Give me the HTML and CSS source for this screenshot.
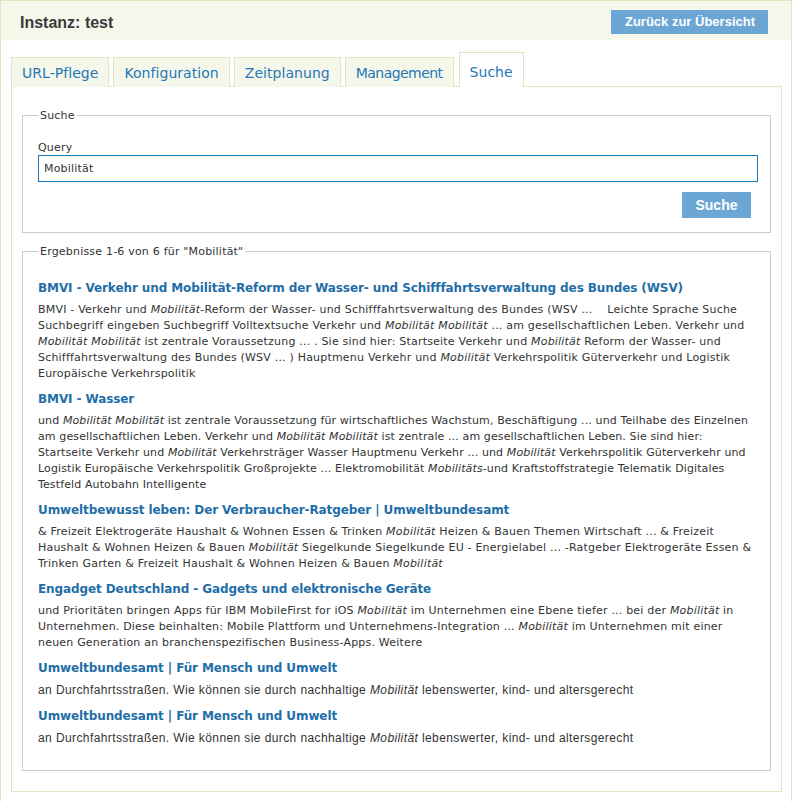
FILE: index.html
```html
<!DOCTYPE html>
<html lang="de">
<head>
<meta charset="utf-8">
<title>Instanz: test</title>
<link rel="stylesheet" href="styles.css">
</head>
<body>
<div class="page">
  <div class="header">
    <h1 class="title">Instanz: test</h1>
    <a class="btn btn-back" href="#">Zurück zur Übersicht</a>
  </div>
  <div class="tabs">
    <a class="tab" href="#">URL-Pflege</a>
    <a class="tab" href="#">Konfiguration</a>
    <a class="tab" href="#">Zeitplanung</a>
    <a class="tab tab-tight" href="#">Management</a>
    <a class="tab tab-active" href="#">Suche</a>
  </div>
  <div class="panel">
    <fieldset class="box box-search">
      <legend class="legend">Suche</legend>
      <label class="label" for="q">Query</label>
      <input class="input" id="q" type="text" value="Mobilität">
      <div class="actions">
        <button class="btn btn-search" type="button">Suche</button>
      </div>
    </fieldset>
    <fieldset class="box box-results">
      <legend class="legend">Ergebnisse 1-6 von 6 für "Mobilität"</legend>
      <div class="result">
        <a class="result-title" href="#">BMVI - Verkehr und Mobilität-Reform der Wasser- und Schifffahrtsverwaltung des Bundes (WSV)</a>
        <p class="result-text">BMVI - Verkehr und <em>Mobilität</em>-Reform der Wasser- und Schifffahrtsverwaltung des Bundes (WSV ... &nbsp;&nbsp;&nbsp;Leichte Sprache Suche Suchbegriff eingeben Suchbegriff Volltextsuche Verkehr und <em>Mobilität Mobilität</em> ... am gesellschaftlichen Leben. Verkehr und <em>Mobilität Mobilität</em> ist zentrale Voraussetzung ... . Sie sind hier: Startseite Verkehr und <em>Mobilität</em> Reform der Wasser- und Schifffahrtsverwaltung des Bundes (WSV ... ) Hauptmenu Verkehr und <em>Mobilität</em> Verkehrspolitik Güterverkehr und Logistik Europäische Verkehrspolitik</p>
      </div>
      <div class="result">
        <a class="result-title" href="#">BMVI - Wasser</a>
        <p class="result-text result-text-tight">und <em>Mobilität Mobilität</em> ist zentrale Voraussetzung für wirtschaftliches Wachstum, Beschäftigung ... und Teilhabe des Einzelnen am gesellschaftlichen Leben. Verkehr und <em>Mobilität Mobilität</em> ist zentrale ... am gesellschaftlichen Leben. Sie sind hier: Startseite Verkehr und <em>Mobilität</em> Verkehrsträger Wasser Hauptmenu Verkehr ... und <em>Mobilität</em> Verkehrspolitik Güterverkehr und Logistik Europäische Verkehrspolitik Großprojekte ... Elektromobilität <em>Mobilitäts</em>-und Kraftstoffstrategie Telematik Digitales Testfeld Autobahn Intelligente</p>
      </div>
      <div class="result">
        <a class="result-title" href="#">Umweltbewusst leben: Der Verbraucher-Ratgeber | Umweltbundesamt</a>
        <p class="result-text">&amp; Freizeit Elektrogeräte Haushalt &amp; Wohnen Essen &amp; Trinken <em>Mobilität</em> Heizen &amp; Bauen Themen Wirtschaft ... &amp; Freizeit Haushalt &amp; Wohnen Heizen &amp; Bauen <em>Mobilität</em> Siegelkunde Siegelkunde EU - Energielabel ... -Ratgeber Elektrogeräte Essen &amp; Trinken Garten &amp; Freizeit Haushalt &amp; Wohnen Heizen &amp; Bauen <em>Mobilität</em></p>
      </div>
      <div class="result">
        <a class="result-title" href="#">Engadget Deutschland - Gadgets und elektronische Geräte</a>
        <p class="result-text">und Prioritäten bringen Apps für IBM MobileFirst for iOS <em>Mobilität</em> im Unternehmen eine Ebene tiefer ... bei der <em>Mobilität</em> in Unternehmen. Diese beinhalten: Mobile Plattform und Unternehmens-Integration ... <em>Mobilität</em> im Unternehmen mit einer neuen Generation an branchenspezifischen Business-Apps. Weitere</p>
      </div>
      <div class="result">
        <a class="result-title" href="#">Umweltbundesamt | Für Mensch und Umwelt</a>
        <p class="result-text result-text-narrow">an Durchfahrtsstraßen. Wie können sie durch nachhaltige <em>Mobilität</em> lebenswerter, kind- und altersgerecht</p>
      </div>
      <div class="result">
        <a class="result-title" href="#">Umweltbundesamt | Für Mensch und Umwelt</a>
        <p class="result-text result-text-narrow">an Durchfahrtsstraßen. Wie können sie durch nachhaltige <em>Mobilität</em> lebenswerter, kind- und altersgerecht</p>
      </div>
    </fieldset>
  </div>
</div>
</body>
</html>
```

FILE: styles.css
```css
* { box-sizing: border-box; }

html, body {
  margin: 0;
  padding: 0;
  background: #ffffff;
}

body {
  font-family: "DejaVu Sans", Verdana, sans-serif;
  font-size: 11px;
  color: #333333;
}

.page {
  width: 792px;
  min-height: 820px;
  border: 1px solid #dfe6bf;
  background: #ffffff;
}

.header {
  height: 39px;
  background: #f5f7ea;
  display: flex;
  align-items: center;
  justify-content: space-between;
  padding: 0 23px 0 19px;
}

.title {
  margin: 0;
  padding-top: 5px;
  font-family: "Liberation Sans", Arial, sans-serif;
  font-weight: bold;
  font-size: 16px;
  color: #3a3a3a;
}

.btn {
  display: inline-block;
  border: 0;
  background: #6ba6d5;
  color: #ffffff;
  font-family: "Liberation Sans", Arial, sans-serif;
  font-weight: bold;
  text-decoration: none;
  text-align: center;
}

.btn-back {
  height: 24px;
  line-height: 24px;
  font-size: 13px;
  padding: 0 13px 0 14px;
  margin-top: 2px;
}

.tabs {
  display: flex;
  align-items: flex-end;
  gap: 4px;
  padding: 12px 0 0 10px;
  height: 47px;
  position: relative;
  z-index: 1;
}

.tab {
  display: block;
  height: 30px;
  padding: 0 10px;
  line-height: 30px;
  font-size: 14px;
  letter-spacing: 0.05px;
  color: #2577b8;
  text-decoration: none;
  background: #f5f7ea;
  border: 1px solid #dfe6bf;
  border-bottom: 0;
}

.tab-tight {
  letter-spacing: -0.55px;
}

.tab-active {
  height: 35px;
  line-height: 38px;
  background: #ffffff;
  margin-left: 1px;
}

.panel {
  margin: -1px 9px 0 10px;
  border: 1px solid #dfe6bf;
  padding: 22px 10px 20px 10px;
}

.box {
  margin: 0;
  border: 1px solid #cccccc;
  padding: 19px 12px 14px 15px;
  min-width: 0;
}

.legend {
  padding: 0 2px;
  font-size: 11px;
  letter-spacing: 0.2px;
  color: #333333;
}

.label {
  display: block;
  font-size: 11px;
  line-height: 13px;
  margin-bottom: 1px;
  letter-spacing: 0.2px;
}

.input {
  display: block;
  width: 100%;
  height: 27px;
  border: 1px solid #1b79bd;
  padding: 0 5px;
  font-family: "DejaVu Sans", Verdana, sans-serif;
  font-size: 11px;
  letter-spacing: 0.2px;
  color: #333333;
  outline: none;
}

.actions {
  display: flex;
  justify-content: flex-end;
  padding-right: 7px;
  margin-top: 10px;
}

.btn-search {
  width: 69px;
  height: 26px;
  font-size: 14px;
  padding: 0;
}

.box-results {
  margin-top: 12px;
  padding: 21px 12px 15px 15px;
}

.result {
  margin-bottom: 8px;
}

.result-title {
  display: block;
  font-weight: bold;
  font-size: 12px;
  line-height: 19px;
  letter-spacing: -0.1px;
  color: #1f6ea8;
  text-decoration: none;
  margin-bottom: 4px;
}

.result-text {
  margin: 0;
  font-size: 11px;
  line-height: 16px;
  letter-spacing: 0.2px;
  color: #333333;
}

.result-text-tight {
  letter-spacing: 0.12px;
}

.result-text-narrow {
  font-family: "Liberation Sans", Arial, sans-serif;
  font-size: 12px;
  line-height: 17px;
  letter-spacing: 0.4px;
}
```
